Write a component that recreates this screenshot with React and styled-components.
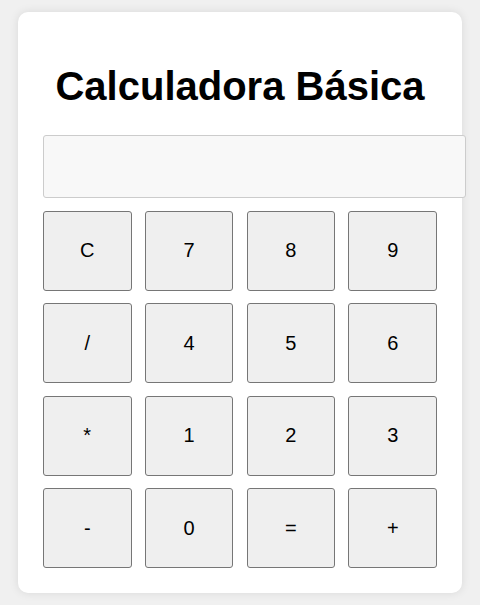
import React from 'react'
import styled, { createGlobalStyle } from 'styled-components'

const Global = createGlobalStyle`
    html, body {
        margin:0;
        padding:0;
    }
    body {
        background-color:#f0f0f0;
        font-family:"Liberation Sans", Arial, sans-serif;
    }
`
const Pagina = styled.div`
    min-height:100vh;
    display:flex;
    align-items:center;
    justify-content:center;
`
const Caixa = styled.div`
    width:394px;
    padding:25px;
    background-color:white;
    border-radius:10px;
    box-shadow:0 0 10px rgba(0,0,0,0.1);
`
const Titulo = styled.h1`
    margin:26px 0 26px;
    font-size:40px;
    line-height:46px;
    font-weight:bold;
    text-align:center;
    color:#000;
`
const Visor = styled.input`
    display:block;
    box-sizing:border-box;
    width:423px;
    height:63px;
    margin:0 0 13px;
    padding:10px;
    font-size:2em;
    font-family:"Liberation Sans", Arial, sans-serif;
    text-align:right;
    background-color:#f8f8f8;
    border:1px solid #ccc;
    border-radius:3px;
    outline:none;
`
const Teclado = styled.div`
    display:grid;
    grid-template-columns:repeat(4, 1fr);
    column-gap:13.3px;
    row-gap:12.67px;
`
const Tecla = styled.button`
    height:80px;
    font-size:20px;
    font-family:"Liberation Sans", Arial, sans-serif;
    color:#000;
    background-color:#efefef;
    border:1px solid #767676;
    border-radius:3px;
    padding:0;
    cursor:pointer;
`

const teclas = ['C', '7', '8', '9', '/', '4', '5', '6', '*', '1', '2', '3', '-', '0', '=', '+']

export default function App() {
    return (
        <>
            <Global />
            <Pagina>
                <Caixa>
                    <Titulo>Calculadora Básica</Titulo>
                    <Visor type="text" readOnly />
                    <Teclado>
                        {teclas.map(t => <Tecla key={t}>{t}</Tecla>)}
                    </Teclado>
                </Caixa>
            </Pagina>
        </>
    )
}
